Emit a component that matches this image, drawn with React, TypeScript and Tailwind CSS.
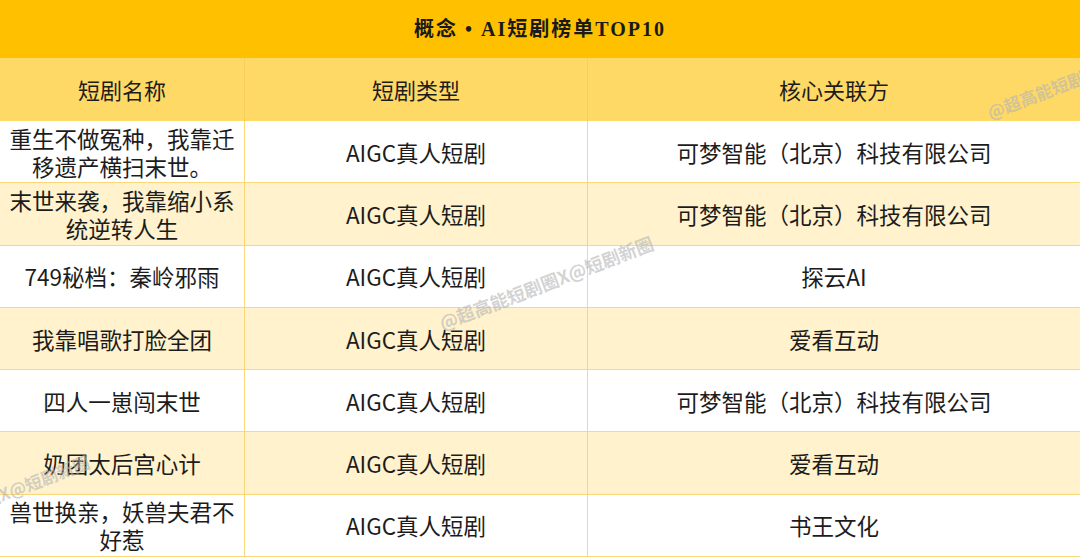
const rows = [
  { name: "重生不做冤种，我靠迁移遗产横扫末世。", type: "AIGC真人短剧", party: "可梦智能（北京）科技有限公司" },
  { name: "末世来袭，我靠缩小系统逆转人生", type: "AIGC真人短剧", party: "可梦智能（北京）科技有限公司" },
  { name: "749秘档：秦岭邪雨", type: "AIGC真人短剧", party: "探云AI" },
  { name: "我靠唱歌打脸全团", type: "AIGC真人短剧", party: "爱看互动" },
  { name: "四人一崽闯末世", type: "AIGC真人短剧", party: "可梦智能（北京）科技有限公司" },
  { name: "奶团太后宫心计", type: "AIGC真人短剧", party: "爱看互动" },
  { name: "兽世换亲，妖兽夫君不好惹", type: "AIGC真人短剧", party: "书王文化" },
];

const sans = "font-['Microsoft_YaHei','Noto_Sans_CJK_SC',sans-serif]";
const mark = "absolute -rotate-[21deg] origin-left font-bold text-[#b5b5b5]/60 whitespace-nowrap pointer-events-none";

export default function App() {
  return (
    <div className={`relative w-[1080px] h-[557px] overflow-hidden bg-white text-[#1c1c1c] ${sans}`}>
      {/* Title */}
      <div className="h-[58px] bg-[#FFC000] flex items-center justify-center">
        <h1 className="font-['Liberation_Serif','Noto_Sans_CJK_SC',serif] font-bold text-[20px] tracking-[2px] text-[#1a1a1a]">
          概念 • AI短剧榜单TOP10
        </h1>
      </div>

      {/* Header */}
      <div className="grid grid-cols-[245px_343px_1fr] h-[63px] bg-[#FFD966] text-[22px]">
        <div className="flex items-center justify-center border-r border-[#F7CF5C]">短剧名称</div>
        <div className="flex items-center justify-center border-r border-[#F7CF5C]">短剧类型</div>
        <div className="flex items-center justify-center">核心关联方</div>
      </div>

      {/* Body */}
      {rows.map((r, i) => (
        <div
          key={i}
          className={`grid grid-cols-[245px_343px_1fr] h-[62.3px] border-b border-[#FAD778] text-[22.5px] leading-[28px] ${
            i % 2 === 1 ? "bg-[#FFF2CC]" : "bg-white"
          }`}
        >
          <div className="flex items-center justify-center text-center px-[6px] border-r border-[#FAD778]">
            {r.name}
          </div>
          <div className="flex items-center justify-center border-r border-[#FAD778]">{r.type}</div>
          <div className="flex items-center justify-center">{r.party}</div>
        </div>
      ))}

      {/* Watermarks */}
      <div className={`${mark} left-[440px] top-[310px] text-[18px]`}>@超高能短剧圈X@短剧新圈</div>
      <div className={`${mark} left-[988px] top-[100px] text-[17px]`}>@超高能短剧圈X@短剧新圈</div>
      <div className={`${mark} left-[-112px] top-[525px] text-[17px]`}>@超高能短剧圈X@短剧新圈</div>
    </div>
  );
}
